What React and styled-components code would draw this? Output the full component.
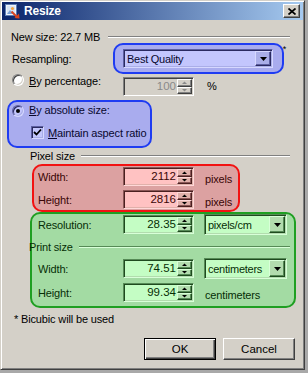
import styled, { createGlobalStyle } from "styled-components";

const GlobalStyle = createGlobalStyle`
  html, body {
    margin: 0;
    padding: 0;
  }
  body {
    background: #a9a9a9;
    font-family: "Liberation Sans", Arial, sans-serif;
    font-size: 11px;
    letter-spacing: -0.15px;
    color: #000;
  }
  * {
    box-sizing: border-box;
  }
`;

// colours of each highlighter tint laid over the classic grey dialog
const tones = {
  none: { fill: "transparent", field: "#ffffff", face: "#d4d0c8", edge: "transparent", ink: "#000000", shadow: "#808080", dark: "#404040", light: "#ffffff" },
  blue: { fill: "#a9acee", field: "#c3c6fd", face: "#aaaee8", edge: "#1f3cf2", ink: "#08082e", shadow: "#5c5ea0", dark: "#2a2a60", light: "#d6d8ff" },
  red: { fill: "#dca1a1", field: "#ffc2c2", face: "#e0b0aa", edge: "#f21212", ink: "#3a0606", shadow: "#8a5656", dark: "#4a2020", light: "#ffd8d8" },
  green: { fill: "#a3dba3", field: "#c4fdc4", face: "#b2dcae", edge: "#1f9f22", ink: "#062e06", shadow: "#568a56", dark: "#1f4a1f", light: "#d8ffd8" },
};
const t = (key) => (p) => tones[p.$tone || "none"][key];

const Window = styled.div`
  width: 305px;
  height: 370px;
  padding: 1px;
  display: flex;
  flex-direction: column;
  background: #d4d0c8;
  border: 1px solid;
  border-color: #d4d0c8 #404040 #404040 #d4d0c8;
  box-shadow: inset 1px 1px #fff, inset -1px -1px #808080;
`;

const TitleBar = styled.div`
  flex: none;
  height: 18px;
  display: flex;
  align-items: center;
  padding: 0 3px 0 2px;
  background: linear-gradient(to right, #0a246a, #a6caf0);
`;

const TitleText = styled.span`
  flex: 1;
  margin-left: 4px;
  color: #fff;
  font-weight: bold;
  font-size: 12px;
  letter-spacing: -0.2px;
`;

const CloseButton = styled.span`
  width: 17px;
  height: 14px;
  display: flex;
  align-items: center;
  justify-content: center;
  background: #d4d0c8;
  border: 1px solid;
  border-color: #fff #404040 #404040 #fff;
  box-shadow: inset -1px -1px #808080;
`;

const DialogBody = styled.div`
  flex: 1;
  display: flex;
  flex-direction: column;
`;

const SectionRow = styled.div`
  display: flex;
  align-items: center;
  height: 13px;
  margin-top: ${(p) => p.$top}px;
  margin-left: ${(p) => p.$indent}px;
  padding-right: ${(p) => p.$right}px;
  white-space: nowrap;
`;

const EtchedLine = styled.span`
  flex: 1;
  height: 2px;
  margin: 1px 0 0 ${(p) => p.$gap}px;
  border-top: 1px solid ${t("shadow")};
  border-bottom: 1px solid ${t("light")};
`;

const Highlight = styled.div`
  position: relative;
  flex: none;
  background: ${t("fill")};
  border: 2px solid ${t("edge")};
  border-radius: 10px;
  color: ${t("ink")};
`;

const ResampleRow = styled.div`
  display: flex;
  align-items: center;
  height: 31px;
  padding-left: 10px;
`;

const ResampleFrame = styled(Highlight)`
  width: 171px;
  height: 31px;
  display: flex;
  align-items: center;
  padding-left: 8px;
`;

const Asterisk = styled.span`
  position: absolute;
  right: -4px;
  top: -1px;
  font-size: 9px;
  color: #000;
`;

const FieldLabel = styled.span`
  flex: none;
  width: ${(p) => p.$w}px;
  white-space: nowrap;
`;

const Key = styled.u`
  text-decoration-thickness: 1px;
  text-underline-offset: 1px;
`;

const PercentRow = styled.div`
  display: flex;
  align-items: flex-start;
  height: 19px;
  margin-top: 3px;
  padding-left: 10px;
`;

const OptionGroup = styled.div`
  width: 111px;
  display: flex;
  align-items: flex-start;
`;

const OptionText = styled.span`
  margin: ${(p) => p.$shift || 0}px 0 0 5px;
  line-height: 13px;
  white-space: nowrap;
`;

const Percent = styled.span`
  margin: 3px 0 0 13px;
`;

const AbsFrame = styled(Highlight)`
  width: 145px;
  height: 48px;
  margin: 4px 0 0 5px;
  padding: 1px 0 0 3px;
`;

const OptionRow = styled.div`
  display: flex;
  align-items: center;
  height: 13px;
  margin-top: ${(p) => p.$top}px;
  padding-left: ${(p) => p.$indent || 0}px;
  white-space: nowrap;
`;

const Radio = styled.span`
  flex: none;
  width: 12px;
  height: 12px;
  margin-top: ${(p) => p.$shift || 0}px;
  display: flex;
  align-items: center;
  justify-content: center;
  border-radius: 50%;
  background: ${t("field")};
  border: 1px solid;
  border-color: ${t("shadow")} ${t("light")} ${t("light")} ${t("shadow")};
  box-shadow: inset 1px 1px ${t("dark")}, inset -1px -1px ${t("face")};
  &::after {
    content: "";
    display: ${(p) => (p.$checked ? "block" : "none")};
    width: 4px;
    height: 4px;
    border-radius: 50%;
    background: #000;
  }
`;

const CheckBox = styled.span`
  flex: none;
  width: 13px;
  height: 13px;
  margin-right: 4px;
  display: flex;
  align-items: center;
  justify-content: center;
  background: ${t("field")};
  border: 1px solid;
  border-color: ${t("shadow")} ${t("light")} ${t("light")} ${t("shadow")};
  box-shadow: inset 1px 1px ${t("dark")}, inset -1px -1px ${t("face")};
`;

const PixelFrame = styled(Highlight)`
  width: 208px;
  height: 48px;
  margin: 2px 0 0 30px;
  padding: 1px 0 0 4px;
`;

const PrintFrame = styled(Highlight)`
  width: 266px;
  height: 96px;
  margin-left: 28px;
  padding: 0 4px 0 6px;
`;

const FieldRow = styled.div`
  display: flex;
  align-items: center;
  height: ${(p) => p.$h || 19}px;
  margin-top: ${(p) => p.$top || 0}px;
`;

const Unit = styled.span`
  margin-left: ${(p) => p.$gap}px;
  padding-top: 5px;
  white-space: nowrap;
`;

const SpinFrame = styled.div`
  flex: none;
  width: 71px;
  height: 19px;
  display: flex;
  background: ${(p) => (p.$disabled ? "#d4d0c8" : tones[p.$tone].field)};
  border: 1px solid;
  border-color: ${t("shadow")} ${t("light")} ${t("light")} ${t("shadow")};
  box-shadow: inset 1px 1px ${t("dark")}, inset -1px -1px ${t("face")};
  padding: 1px;
`;

const SpinValue = styled.span`
  flex: 1;
  text-align: right;
  padding-right: 1px;
  line-height: 15px;
  font-size: 11.5px;
  letter-spacing: 0;
  color: ${(p) => (p.$disabled ? "#8a8a8a" : tones[p.$tone].ink)};
`;

const Spinner = styled.span`
  flex: none;
  width: 15px;
  display: flex;
  flex-direction: column;
`;

const SpinButton = styled.span`
  flex: 1;
  display: flex;
  align-items: center;
  justify-content: center;
  background: ${t("face")};
  border: 1px solid;
  border-color: ${t("light")} ${t("dark")} ${t("dark")} ${t("light")};
  box-shadow: inset -1px -1px ${t("shadow")};
`;

const ComboFrame = styled.div`
  flex: none;
  width: ${(p) => p.$w}px;
  height: ${(p) => p.$h}px;
  margin-left: ${(p) => p.$gap || 0}px;
  display: flex;
  padding: 1px;
  background: ${t("field")};
  border: 1px solid;
  border-color: ${t("shadow")} ${t("light")} ${t("light")} ${t("shadow")};
  box-shadow: inset 1px 1px ${t("dark")}, inset -1px -1px ${t("face")};
`;

const ComboText = styled.span`
  flex: 1;
  padding-left: 2px;
  display: flex;
  align-items: center;
  font-size: 11px;
  letter-spacing: -0.25px;
  color: ${t("ink")};
  white-space: nowrap;
`;

const DropButton = styled.span`
  flex: none;
  width: 16px;
  display: flex;
  align-items: center;
  justify-content: center;
  background: ${t("face")};
  border: 1px solid;
  border-color: ${t("light")} ${t("dark")} ${t("dark")} ${t("light")};
  box-shadow: inset -1px -1px ${t("shadow")};
`;

const FootNote = styled.div`
  margin-top: 5px;
  padding-left: 12px;
  line-height: 13px;
`;

const ButtonRow = styled.div`
  display: flex;
  justify-content: flex-end;
  gap: 7px;
  margin-top: 12px;
  padding-right: 8px;
`;

const PushButton = styled.button`
  width: 72px;
  height: 22px;
  padding: 0;
  font-family: "Liberation Sans", Arial, sans-serif;
  font-size: 11.5px;
  color: #000;
  background: #d4d0c8;
  border: 1px solid;
  border-color: ${(p) => (p.$default ? "#000" : "#fff #404040 #404040 #fff")};
  box-shadow: ${(p) =>
    p.$default
      ? "inset 1px 1px #fff, inset -1px -1px #404040, inset -2px -2px #808080"
      : "inset -1px -1px #808080"};
`;

function Arrow({ dir, color = "#000" }) {
  const points = dir === "up" ? "0,3 5,3 2.5,0.5" : "0,0 5,0 2.5,2.5";
  return (
    <svg width="5" height="3" viewBox="0 0 5 3">
      <polygon points={points} fill={color} />
    </svg>
  );
}

function SpinBox({ value, tone = "none", disabled }) {
  const arrow = disabled ? "#8a8a8a" : "#000";
  return (
    <SpinFrame $tone={tone} $disabled={disabled}>
      <SpinValue $tone={tone} $disabled={disabled}>{value}</SpinValue>
      <Spinner>
        <SpinButton $tone={tone}><Arrow dir="up" color={arrow} /></SpinButton>
        <SpinButton $tone={tone}><Arrow dir="down" color={arrow} /></SpinButton>
      </Spinner>
    </SpinFrame>
  );
}

function Combo({ text, tone = "none", w, h, gap }) {
  return (
    <ComboFrame $tone={tone} $w={w} $h={h} $gap={gap}>
      <ComboText $tone={tone}>{text}</ComboText>
      <DropButton $tone={tone}>
        <svg width="7" height="4" viewBox="0 0 7 4">
          <polygon points="0,0 7,0 3.5,4" fill="#000" />
        </svg>
      </DropButton>
    </ComboFrame>
  );
}

function AppIcon() {
  return (
    <svg width="16" height="16" viewBox="0 0 16 16">
      <rect x="1.5" y="1.5" width="11" height="11" fill="#eef3fb" stroke="#5d7db4" />
      <rect x="3" y="3" width="8" height="8" fill="#d7e4f5" />
      <circle cx="8.5" cy="5.5" r="1.6" fill="#f3a443" />
      <path d="M3 11 L6 7 L9 11 Z" fill="#7aa0d4" />
      <path d="M7.5 8.5 L13.5 14.5" stroke="#d8431f" strokeWidth="2" />
      <polygon points="15.5,15.5 10.5,15 15,10.5" fill="#d8431f" />
    </svg>
  );
}

export default function App() {
  return (
    <>
      <GlobalStyle />
      <Window>
        <TitleBar>
          <AppIcon />
          <TitleText>Resize</TitleText>
          <CloseButton>
            <svg width="8" height="7" viewBox="0 0 8 7">
              <path d="M0.5 0.5 L7.5 6.5 M7.5 0.5 L0.5 6.5" stroke="#000" strokeWidth="1.7" />
            </svg>
          </CloseButton>
        </TitleBar>

        <DialogBody>
          <SectionRow $top={10} $indent={9} $right={13}>
            New size: 22.7 MB
            <EtchedLine $gap={8} />
          </SectionRow>

          <ResampleRow>
            <FieldLabel $w={101}>Resampling:</FieldLabel>
            <ResampleFrame $tone="blue">
              <Combo text="Best Quality" tone="blue" w={150} h={19} />
              <Asterisk>*</Asterisk>
            </ResampleFrame>
          </ResampleRow>

          <PercentRow>
            <OptionGroup>
              <Radio $shift={-3} />
              <OptionText $shift={-2}>
                <Key>B</Key>y percentage:
              </OptionText>
            </OptionGroup>
            <SpinBox value="100" disabled />
            <Percent>%</Percent>
          </PercentRow>

          <AbsFrame $tone="blue">
            <OptionRow $top={1}>
              <Radio $tone="blue" $checked />
              <OptionText>
                <Key>B</Key>y absolute size:
              </OptionText>
            </OptionRow>
            <OptionRow $top={9} $indent={19}>
              <CheckBox $tone="blue">
                <svg width="9" height="9" viewBox="0 0 9 9">
                  <polyline points="1,4 3.5,6.5 8,1.5" fill="none" stroke="#000" strokeWidth="1.8" />
                </svg>
              </CheckBox>
              <span>
                <Key>M</Key>aintain aspect ratio
              </span>
            </OptionRow>
          </AbsFrame>

          <SectionRow $top={1} $indent={28} $right={13}>
            Pixel size
            <EtchedLine $gap={6} />
          </SectionRow>

          <PixelFrame $tone="red">
            <FieldRow>
              <FieldLabel $w={85}>Width:</FieldLabel>
              <SpinBox value="2112" tone="red" />
              <Unit $gap={11}>pixels</Unit>
            </FieldRow>
            <FieldRow $top={4}>
              <FieldLabel $w={85}>Height:</FieldLabel>
              <SpinBox value="2816" tone="red" />
              <Unit $gap={11}>pixels</Unit>
            </FieldRow>
          </PixelFrame>

          <PrintFrame $tone="green">
            <FieldRow $h={21}>
              <FieldLabel $w={85}>Resolution:</FieldLabel>
              <SpinBox value="28.35" tone="green" />
              <Combo text="pixels/cm" tone="green" w={83} h={21} gap={10} />
            </FieldRow>
            <SectionRow $top={5} $indent={-9} $right={0}>
              Print size
              <EtchedLine $gap={6} $tone="green" />
            </SectionRow>
            <FieldRow $h={21} $top={5}>
              <FieldLabel $w={85}>Width:</FieldLabel>
              <SpinBox value="74.51" tone="green" />
              <Combo text="centimeters" tone="green" w={83} h={21} gap={10} />
            </FieldRow>
            <FieldRow $top={4}>
              <FieldLabel $w={85}>Height:</FieldLabel>
              <SpinBox value="99.34" tone="green" />
              <Unit $gap={11}>centimeters</Unit>
            </FieldRow>
          </PrintFrame>

          <FootNote>* Bicubic will be used</FootNote>

          <ButtonRow>
            <PushButton $default>OK</PushButton>
            <PushButton>Cancel</PushButton>
          </ButtonRow>
        </DialogBody>
      </Window>
    </>
  );
}
